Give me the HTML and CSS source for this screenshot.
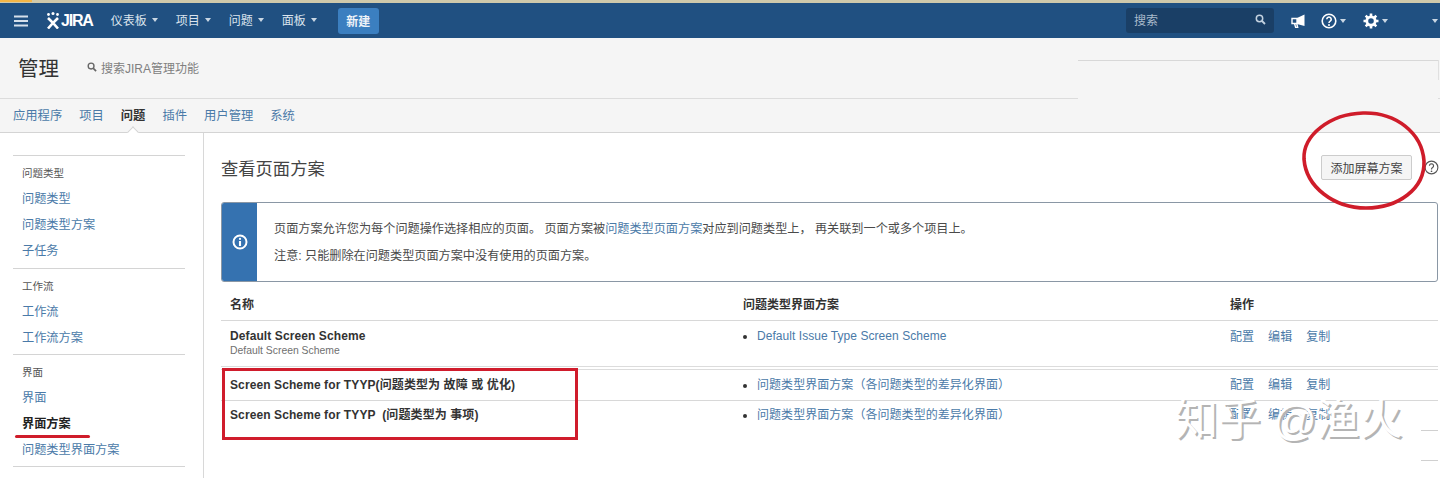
FILE: index.html
```html
<!DOCTYPE html>
<html>
	<head>
		<meta charset="utf-8">
		<title>查看页面方案</title>
		<link rel="stylesheet" href="styles.css">
	</head>
	<body>
		<div class="strip"><span class="strip-tab"></span></div>
		<header class="topbar">
			<svg class="burger" width="16" height="12" viewBox="0 0 16 12"><path d="M1 1.500h14M1 6h14M1 10.500h14" stroke="#d5e0eb" stroke-width="2" fill="none"/></svg>
			<div class="logo">
				<svg width="15" height="17" viewBox="0 0 15 17"><circle cx="2.500" cy="2.500" r="1.400" fill="#fff"/><circle cx="7" cy="1.600" r="1.500" fill="#fff"/><circle cx="11.500" cy="2.500" r="1.400" fill="#fff"/><path d="M2 6l5 5 5-5M2 16.500l5-5.500 5 5.500" stroke="#fff" stroke-width="2.600" fill="none"/></svg>
				<span>JIRA</span>
			</div>
			<nav class="topnav">
				<a>仪表板<i class="caret"></i></a>
				<a>项目<i class="caret"></i></a>
				<a>问题<i class="caret"></i></a>
				<a>面板<i class="caret"></i></a>
			</nav>
			<button class="create">新建</button>
			<div class="topright">
				<div class="search">
					<span>搜索</span>
					<svg width="11" height="11" viewBox="0 0 11 11"><circle cx="4.500" cy="4.500" r="3.200" stroke="#c4d2e0" stroke-width="1.500" fill="none"/><path d="M7 7l3 3" stroke="#c4d2e0" stroke-width="1.800"/></svg>
				</div>
				<svg class="horn" width="15" height="14" viewBox="0 0 15 14"><path d="M1 4.500h5v5H1zM3.500 9.500l1.200 4h2l-1-4" stroke="#fff" stroke-width="1.400" fill="none"/><path d="M6 4L13.500 .5v11.500L6 10z" fill="#fff"/></svg>
				<span class="tool tool-help">
					<svg width="16" height="16" viewBox="0 0 16 16"><circle cx="8" cy="8" r="6.800" stroke="#fff" stroke-width="1.600" fill="none"/><path d="M5.800 6.200a2.200 2.200 0 1 1 3.400 1.900c-.8.500-1.200.9-1.200 1.900" stroke="#fff" stroke-width="1.600" fill="none"/><circle cx="8" cy="12" r="1" fill="#fff"/></svg>
					<i class="caret"></i>
				</span>
				<span class="tool tool-gear">
					<svg width="16" height="16" viewBox="0 0 16 16"><circle cx="8" cy="8" r="4.200" stroke="#fff" stroke-width="2.800" fill="none"/><path d="M8 .5v3M8 12.500v3M.5 8h3M12.500 8h3M2.700 2.700l2.100 2.100M11.200 11.200l2.100 2.100M2.700 13.300l2.100-2.100M11.200 4.800l2.100-2.100" stroke="#fff" stroke-width="2.600"/></svg>
					<i class="caret"></i>
				</span>
				<i class="caret caret-user"></i>
			</div>
		</header>

		<div class="adminbar">
			<h1>管理</h1>
			<div class="adminsearch">
				<svg width="10" height="10" viewBox="0 0 11 11"><circle cx="4.500" cy="4.500" r="3.200" stroke="#666" stroke-width="1.500" fill="none"/><path d="M7 7l3 3" stroke="#666" stroke-width="1.800"/></svg>
				<span>搜索JIRA管理功能</span>
			</div>
		</div>

		<nav class="tabs">
			<a>应用程序</a>
			<a>项目</a>
			<a class="active">问题</a>
			<a>插件</a>
			<a>用户管理</a>
			<a>系统</a>
		</nav>

		<div class="layout">
			<aside class="sidebar">
				<section class="sidegroup">
					<h4>问题类型</h4>
					<a>问题类型</a>
					<a>问题类型方案</a>
					<a>子任务</a>
				</section>
				<section class="sidegroup">
					<h4>工作流</h4>
					<a>工作流</a>
					<a>工作流方案</a>
				</section>
				<section class="sidegroup">
					<h4>界面</h4>
					<a>界面</a>
					<a class="current">界面方案</a>
					<a>问题类型界面方案</a>
				</section>
				<div class="sideend"></div>
			</aside>

			<main class="content">
				<div class="titlerow">
					<h2>查看页面方案</h2>
					<button class="addbtn">添加屏幕方案</button>
					<svg class="helpicon" width="15" height="15" viewBox="0 0 16 16"><circle cx="8" cy="8" r="6.800" stroke="#555" stroke-width="1.200" fill="none"/><path d="M5.800 6.200a2.200 2.200 0 1 1 3.400 1.900c-.8.500-1.200.9-1.200 1.900" stroke="#555" stroke-width="1.300" fill="none"/><circle cx="8" cy="12" r=".9" fill="#555"/></svg>
				</div>

				<div class="infobox">
					<div class="infoicon">
						<svg width="16" height="16" viewBox="0 0 16 16"><circle cx="8" cy="8" r="6.500" stroke="#fff" stroke-width="2" fill="none"/><circle cx="8" cy="4.900" r="1.100" fill="#fff"/><path d="M8 7v5" stroke="#fff" stroke-width="2.100"/></svg>
					</div>
					<div class="infotext">
						<p>页面方案允许您为每个问题操作选择相应的页面。 页面方案被<a>问题类型页面方案</a>对应到问题类型上， 再关联到一个或多个项目上。</p>
						<p>注意: 只能删除在问题类型页面方案中没有使用的页面方案。</p>
					</div>
				</div>

				<table class="schemes">
					<colgroup><col class="col-name"><col class="col-type"><col></colgroup>
					<thead>
						<tr><th>名称</th><th>问题类型界面方案</th><th>操作</th></tr>
					</thead>
					<tbody>
						<tr class="row-first">
							<td><b>Default Screen Scheme</b><div class="desc">Default Screen Scheme</div></td>
							<td><ul><li><a>Default Issue Type Screen Scheme</a></li></ul></td>
							<td class="ops"><a>配置</a><a>编辑</a><a>复制</a></td>
						</tr>
						<tr class="row-second">
							<td><b>Screen Scheme for TYYP(问题类型为 故障 或 优化)</b></td>
							<td><ul><li><a>问题类型界面方案（各问题类型的差异化界面）</a></li></ul></td>
							<td class="ops"><a>配置</a><a>编辑</a><a>复制</a></td>
						</tr>
						<tr class="row-third">
							<td><b>Screen Scheme for TYYP &nbsp;(问题类型为 事项)</b></td>
							<td><ul><li><a>问题类型界面方案（各问题类型的差异化界面）</a></li></ul></td>
							<td class="ops"><a>配置</a><a>编辑</a><a>复制</a></td>
						</tr>
					</tbody>
				</table>
			</main>
		</div>

		<!-- annotations drawn over the screenshot -->
		<div class="mark-rect"></div>
		<div class="mark-line"></div>
		<svg class="mark-ellipse" width="130" height="104" viewBox="0 0 130 104"><path d="M63 4C96 3 122 24 124 52C125 80 98 99 66 99C34 99 6 78 4 50C3 26 30 5 63 4Z" stroke="#cf1c2a" stroke-width="3.600" fill="none"/></svg>
		<div class="patch-rule"></div>
		<div class="patch-top"></div>
		<div class="patch-side"></div>
		<div class="watermark">知乎 @渔火</div>
		<div class="dash dash-a"></div>
		<div class="dash dash-b"></div>
	</body>
</html>
```
FILE: styles.css
```css
html, body {
	margin: 0;
	padding: 0;
	height: 478px;
	overflow: hidden;
	background: #fff;
}

body {
	position: relative;
	font-family: "Liberation Sans", "Noto Sans CJK SC", sans-serif;
	font-size: 12px;
	color: #333;
}

a {
	color: #4a7aa8;
	text-decoration: none;
}

.strip {
	height: 3px;
	background: #cfc9ab;
}

.strip-tab {
	display: block;
	width: 32px;
	height: 2px;
	background: #f2b547;
}

.topbar {
	display: flex;
	align-items: center;
	height: 35px;
	background: #205081;
	color: #fff;
}

.burger {
	margin-left: 13px;
}

.logo {
	display: flex;
	align-items: center;
	margin-left: 17px;
	font-size: 16px;
	letter-spacing: -1.200px;
	font-weight: bold;
}

.topnav {
	display: flex;
	gap: 18px;
	margin-left: 18px;
	padding-bottom: 2px;
}

.topnav a {
	display: flex;
	align-items: center;
	color: #dbe4ed;
}

.caret {
	display: inline-block;
	width: 0;
	height: 0;
	margin-left: 5px;
	border-left: 3.500px solid transparent;
	border-right: 3.500px solid transparent;
	border-top: 4px solid #c9d7e4;
}

.create {
	width: 41px;
	height: 26px;
	margin-left: 21px;
	padding: 0;
	border: 0;
	border-radius: 3px;
	background: #3b7fc0;
	color: #eef3f8;
	font: bold 12px "Liberation Sans", "Noto Sans CJK SC", sans-serif;
}

.topright {
	display: flex;
	align-items: center;
	margin-left: auto;
}

.search {
	display: flex;
	align-items: center;
	justify-content: space-between;
	box-sizing: border-box;
	width: 148px;
	height: 25px;
	padding: 0 8px 2px 8px;
	border-radius: 3px;
	background: #1a3f66;
	color: #a9bacb;
}

.horn {
	margin-left: 17px;
}

.tool {
	display: flex;
	align-items: center;
}

.tool .caret {
	margin-left: 3px;
}

.tool-help {
	margin-left: 15px;
}

.tool-gear {
	margin-left: 17px;
}

.caret-user {
	margin: 0 2px 0 44px;
	border-left-width: 3px;
	border-right-width: 3px;
}

.adminbar {
	display: flex;
	align-items: center;
	box-sizing: border-box;
	height: 61px;
	padding: 0 0 2px 18px;
	background: #f5f5f5;
	border-bottom: 1px solid #dcdcdc;
}

.adminbar h1 {
	margin: 0;
	font-size: 20.500px;
	font-weight: normal;
	color: #333;
}

.adminsearch {
	display: flex;
	align-items: center;
	gap: 4px;
	margin-left: 28px;
	color: #808080;
}

.tabs {
	display: flex;
	gap: 17px;
	position: relative;
	box-sizing: border-box;
	height: 34px;
	padding: 9px 0 0 13px;
	background: #f5f5f5;
	border-bottom: 1px solid #d4d4d4;
	font-size: 12.300px;
}

.tabs a {
	line-height: 16px;
}

.tabs .active {
	position: relative;
	color: #333;
	font-weight: bold;
}

.tabs .active::after {
	content: "";
	position: absolute;
	left: 8px;
	top: 20px;
	width: 7px;
	height: 7px;
	background: #fff;
	border-left: 1px solid #d4d4d4;
	border-top: 1px solid #d4d4d4;
	transform: rotate(45deg);
}

.layout {
	display: flex;
	height: 345px;
}

.sidebar {
	box-sizing: border-box;
	width: 204px;
	padding: 22px 18px 0 13px;
	border-right: 1px solid #d8d8d8;
}

.sidegroup {
	padding: 4px 9px 3px;
	border-top: 1px solid #d4d4d4;
}

.sidegroup:first-child {
	padding-bottom: 4px;
}

.sidegroup h4 {
	margin: 0;
	font-size: 10.500px;
	font-weight: normal;
	line-height: 26px;
	color: #555;
}

.sidegroup a {
	display: block;
	font-size: 12.200px;
	line-height: 26px;
}

.sidegroup .current {
	color: #222;
	font-weight: bold;
}

.sideend {
	border-top: 1px solid #d4d4d4;
}

.content {
	flex: 1;
	padding: 0 2px 0 17px;
}

.titlerow {
	display: flex;
	align-items: center;
	height: 69px;
}

.titlerow h2 {
	margin: 0 auto 0 0;
	font-size: 17.300px;
	font-weight: normal;
	color: #444;
}

.addbtn {
	width: 91px;
	height: 25px;
	padding: 0;
	border: 1px solid #ccc;
	border-radius: 2px;
	background: #f5f5f5;
	color: #444;
	font: 12px "Liberation Sans", "Noto Sans CJK SC", sans-serif;
}

.helpicon {
	margin: 0 -1px 0 12px;
}

.infobox {
	display: flex;
	box-sizing: border-box;
	height: 80px;
	border: 1px solid #8a97a5;
	border-radius: 3px;
	overflow: hidden;
}

.infoicon {
	display: flex;
	align-items: center;
	justify-content: center;
	width: 35px;
	background: #3572b0;
}

.infotext {
	padding: 17px 0 0 17px;
}

.infotext p {
	margin: 0 0 9px;
	line-height: 18px;
	font-size: 12.150px;
	color: #4a4a4a;
}

.schemes {
	width: 100%;
	border-collapse: collapse;
	table-layout: fixed;
}

.col-name {
	width: 513px;
}

.col-type {
	width: 487px;
}

.schemes th {
	box-sizing: border-box;
	height: 38px;
	padding: 5px 9px 0;
	text-align: left;
	font-size: 12px;
	color: #333;
	border-bottom: 1px solid #d8d8d8;
}

.schemes td {
	box-sizing: border-box;
	padding: 0 9px;
	vertical-align: top;
}

.schemes b {
	letter-spacing: .1px;
	color: #333;
}

.desc {
	margin-top: 2px;
	font-size: 10.400px;
	color: #707070;
}

.schemes ul {
	margin: 0;
	padding-left: 14px;
}

.schemes td a {
	letter-spacing: .05px;
}

.ops a {
	margin-right: 14px;
}

.row-first td {
	height: 48px;
	padding-top: 8px;
	border-bottom: 4px double #dcdcdc;
}

.row-first .ops {
	padding-top: 6px;
}

.row-second td {
	height: 32px;
	padding-top: 5px;
	border-bottom: 1px solid #d8d8d8;
}

.row-third td {
	padding-top: 4px;
}

.mark-rect {
	position: absolute;
	left: 222px;
	top: 368px;
	box-sizing: border-box;
	width: 356px;
	height: 72px;
	border: 3px solid #d01c2c;
}

.mark-line {
	position: absolute;
	left: 15px;
	top: 435px;
	width: 75px;
	height: 3px;
	border-radius: 2px;
	background: #cf1c2a;
}

.mark-ellipse {
	position: absolute;
	left: 1300px;
	top: 109px;
}

.patch-rule {
	position: absolute;
	left: 1078px;
	top: 97px;
	width: 360px;
	height: 3px;
	background: #f5f5f5;
}

.patch-top {
	position: absolute;
	left: 1078px;
	top: 60px;
	width: 360px;
	height: 1px;
	background: #d8d8d8;
}

.patch-side {
	position: absolute;
	left: 1438px;
	top: 60px;
	width: 1px;
	height: 20px;
	background: #e0e0e0;
}

.watermark {
	position: absolute;
	left: 1175px;
	top: 393px;
	font-size: 43px;
	line-height: 54px;
	white-space: nowrap;
	color: #fff;
	text-shadow: 2px 2px 0 #b4b4b4;
}

.dash {
	position: absolute;
	left: 1421px;
	width: 17px;
	height: 1px;
	background: #d0d0d0;
}

.dash-a {
	top: 430px;
}

.dash-b {
	top: 460px;
}
```
